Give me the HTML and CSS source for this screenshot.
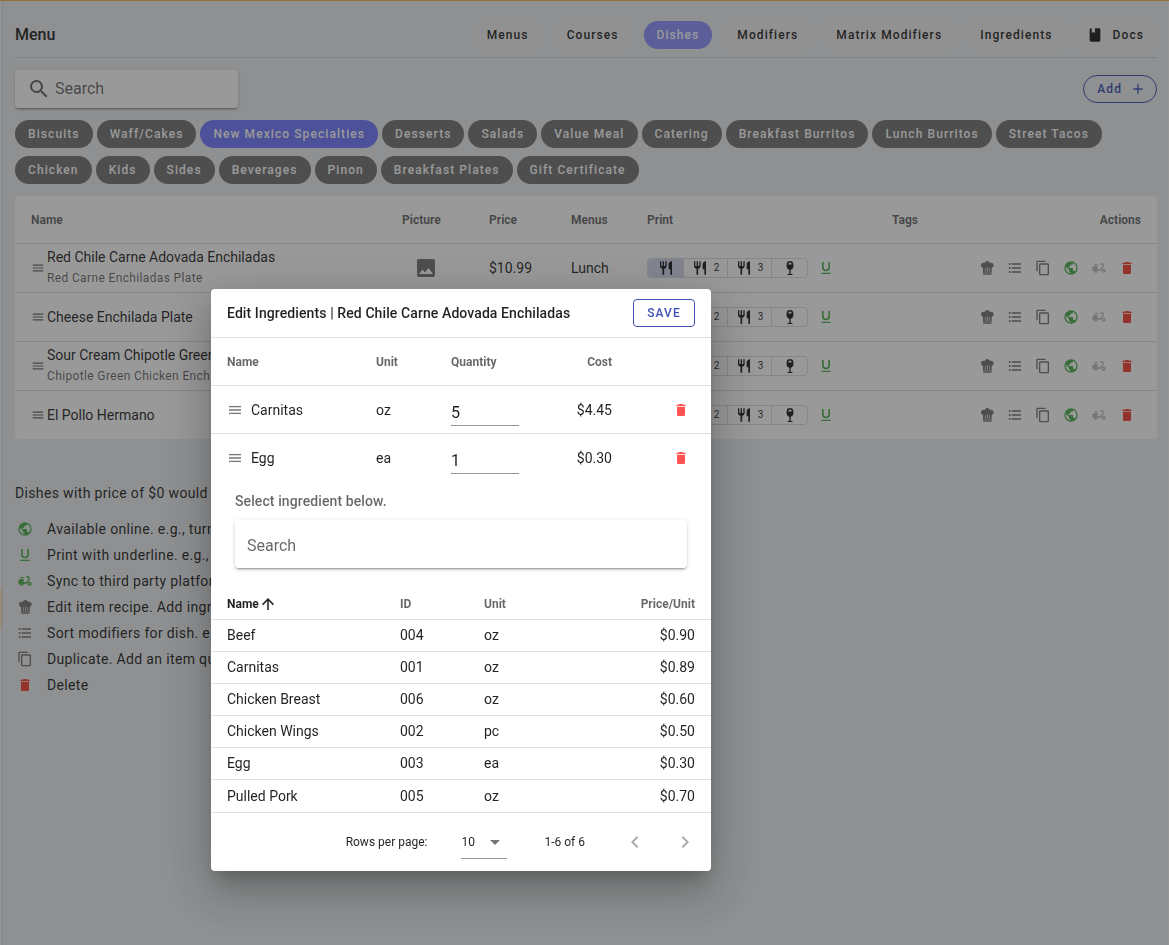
FILE: index.html
```html
<!DOCTYPE html>
<html lang="en">
<head>
<meta charset="utf-8">
<meta name="viewport" content="width=device-width, initial-scale=1">
<title>Menu</title>
<link rel="stylesheet" href="styles.css">
</head>
<body>
<svg class="sprite" aria-hidden="true">
  <symbol id="magnify" viewBox="0 0 24 24"><path d="M9.5,3A6.5,6.5 0 0,1 16,9.5C16,11.11 15.41,12.59 14.44,13.73L14.71,14H15.5L20.5,19L19,20.5L14,15.5V14.71L13.73,14.44C12.59,15.41 11.11,16 9.5,16A6.5,6.5 0 0,1 3,9.5A6.5,6.5 0 0,1 9.5,3M9.5,5C7,5 5,7 5,9.5C5,12 7,14 9.5,14C12,14 14,12 14,9.5C14,7 12,5 9.5,5Z"/></symbol>
  <symbol id="delete" viewBox="0 0 24 24"><path d="M19,4H15.5L14.5,3H9.5L8.5,4H5V6H19M6,19A2,2 0 0,0 8,21H16A2,2 0 0,0 18,19V7H6V19Z"/></symbol>
  <symbol id="earth" viewBox="0 0 24 24"><path d="M17.9,17.39C17.64,16.59 16.89,16 16,16H15V13A1,1 0 0,0 14,12H8V10H10A1,1 0 0,0 11,9V7H13A2,2 0 0,0 15,5V4.59C17.93,5.77 20,8.64 20,12C20,14.08 19.2,15.97 17.9,17.39M11,19.93C7.05,19.44 4,16.08 4,12C4,11.38 4.08,10.78 4.21,10.21L9,15V16A2,2 0 0,0 11,18M12,2A10,10 0 0,0 2,12A10,10 0 0,0 12,22A10,10 0 0,0 22,12A10,10 0 0,0 12,2Z"/></symbol>
  <symbol id="copy" viewBox="0 0 24 24"><path d="M19,21H8V7H19M19,5H8A2,2 0 0,0 6,7V21A2,2 0 0,0 8,23H19A2,2 0 0,0 21,21V7A2,2 0 0,0 19,5M16,1H4A2,2 0 0,0 2,3V17H4V3H16V1Z"/></symbol>
  <symbol id="list" viewBox="0 0 24 24"><path d="M7,5H21V7H7V5M7,13V11H21V13H7M7,19V17H21V19H7M4,4.5A1.5,1.5 0 0,1 4,7.5A1.5,1.5 0 0,1 4,4.5M4,10.5A1.5,1.5 0 0,1 4,13.5A1.5,1.5 0 0,1 4,10.5M4,16.5A1.5,1.5 0 0,1 4,19.5A1.5,1.5 0 0,1 4,16.5Z"/></symbol>
  <symbol id="underline" viewBox="0 0 24 24"><path d="M5,21H19V19H5V21M12,17A6,6 0 0,0 18,11V3H15.5V11A3.5,3.5 0 0,1 12,14.5A3.5,3.5 0 0,1 8.5,11V3H6V11A6,6 0 0,0 12,17Z"/></symbol>
  <symbol id="image" viewBox="0 0 24 24"><path d="M8.5,13.5L11,16.5L14.5,12L19,18H5M21,19V5C21,3.89 20.1,3 19,3H5A2,2 0 0,0 3,5V19A2,2 0 0,0 5,21H19A2,2 0 0,0 21,19Z"/></symbol>
  <symbol id="cutlery" viewBox="0 0 24 24"><path d="M11,9H9V2H7V9H5V2H3V9C3,11.12 4.66,12.84 6.75,12.97V22H9.25V12.97C11.34,12.84 13,11.12 13,9V2H11V9M16,6V14H18.5V22H21V2C18.24,2 16,4.24 16,6Z"/></symbol>
  <symbol id="wine" viewBox="0 0 24 24"><path fill-rule="evenodd" d="M9,2H15C16.5,3.5 17.2,5.5 17.2,8.5C17.2,11.8 15.6,14 13,14.6V20.5L15.8,21.3V22.5H8.2V21.3L11,20.5V14.6C8.4,14 6.8,11.8 6.8,8.5C6.8,5.5 7.5,3.500 9,2M10.2,4L9.6,6.8H14.4L13.8,4H10.2Z"/></symbol>
  <symbol id="chef" viewBox="0 0 24 24"><path d="M12.5,1.5C10.73,1.5 9.17,2.67 8.67,4.37C8.14,4.13 7.58,4 7,4A4,4 0 0,0 3,8C3,9.82 4.24,11.41 6,11.87V19H19V11.87C20.76,11.41 22,9.82 22,8A4,4 0 0,0 18,4C17.42,4 16.86,4.13 16.33,4.37C15.83,2.67 14.27,1.5 12.5,1.5M12,10.5H13V17.5H12V10.5M9,12.5H10V17.5H9V12.5M15,12.5H16V17.5H15V12.5M6,20V21A1,1 0 0,0 7,22H18A1,1 0 0,0 19,21V20H6Z"/></symbol>
  <symbol id="moped" viewBox="0 0 24 24"><path d="M19,7C19,5.9 18.1,5 17,5H14V7H17V9.65L13.5,14H10V9H6C3.79,9 2,10.79 2,13V16H4C4,17.66 5.34,19 7,19S10,17.66 10,16H14.5L19,10.35V7M7,17C6.45,17 6,16.55 6,16H8C8,16.55 7.55,17 7,17M5,6H10V8H5V6M19,13C17.34,13 16,14.34 16,16S17.34,19 19,19S22,17.66 22,16S20.66,13 19,13M19,17C18.45,17 18,16.55 18,16S18.45,15 19,15S20,15.45 20,16S19.55,17 19,17Z"/></symbol>
  <symbol id="book" viewBox="0 0 24 24"><path d="M18,22A2,2 0 0,0 20,20V4C20,2.89 19.1,2 18,2H12V9L9.5,7.5L7,9V2H6A2,2 0 0,0 4,4V20A2,2 0 0,0 6,22H18Z"/></symbol>
  <symbol id="plus" viewBox="0 0 24 24"><path d="M19,13H13V19H11V13H5V11H11V5H13V11H19V13Z"/></symbol>
  <symbol id="left" viewBox="0 0 24 24"><path d="M15.41,16.58L10.83,12L15.41,7.41L14,6L8,12L14,18L15.41,16.58Z"/></symbol>
  <symbol id="right" viewBox="0 0 24 24"><path d="M8.59,16.58L13.17,12L8.59,7.41L10,6L16,12L10,18L8.59,16.58Z"/></symbol>
  <symbol id="up" viewBox="0 0 24 24"><path d="M13,20H11V8L5.5,13.5L4.08,12.08L12,4.16L19.92,12.08L18.5,13.5L13,8V20Z"/></symbol>
  <symbol id="drag" viewBox="0 0 24 24"><path d="M3,6H21V8H3V6M3,11H21V13H3V11M3,16H21V18H3V16Z"/></symbol>
  <symbol id="down" viewBox="0 0 24 24"><path d="M7,10L12,15L17,10H7Z"/></symbol>
</svg>

<div class="page">
  <div class="rail"><span class="rail-mark"></span></div>
  <main class="content">
    <header class="topbar">
      <h1>Menu</h1>
      <nav class="tabs">
        <button class="pill tab">Menus</button>
        <button class="pill tab">Courses</button>
        <button class="pill tab active">Dishes</button>
        <button class="pill tab">Modifiers</button>
        <button class="pill tab">Matrix Modifiers</button>
        <button class="pill tab">Ingredients</button>
        <button class="pill tab docs"><svg class="i16"><use href="#book"/></svg>Docs</button>
      </nav>
    </header>

    <div class="toolbar">
      <label class="search"><svg class="i24"><use href="#magnify"/></svg><input type="text" placeholder="Search" aria-label="Search dishes"></label>
      <button class="pill add">Add<svg class="i16"><use href="#plus"/></svg></button>
    </div>

    <div class="chips">
      <button class="pill chip">Biscuits</button>
      <button class="pill chip">Waff/Cakes</button>
      <button class="pill chip selected">New Mexico Specialties</button>
      <button class="pill chip">Desserts</button>
      <button class="pill chip">Salads</button>
      <button class="pill chip">Value Meal</button>
      <button class="pill chip">Catering</button>
      <button class="pill chip">Breakfast Burritos</button>
      <button class="pill chip">Lunch Burritos</button>
      <button class="pill chip">Street Tacos</button>
      <button class="pill chip">Chicken</button>
      <button class="pill chip">Kids</button>
      <button class="pill chip">Sides</button>
      <button class="pill chip">Beverages</button>
      <button class="pill chip">Pinon</button>
      <button class="pill chip">Breakfast Plates</button>
      <button class="pill chip">Gift Certificate</button>
    </div>

    <table class="dishes">
      <colgroup><col class="d-name"><col class="d-pic"><col class="d-price"><col class="d-menus"><col class="d-print"><col class="d-tags"><col></colgroup>
      <thead><tr><th>Name</th><th>Picture</th><th>Price</th><th>Menus</th><th>Print</th><th>Tags</th><th class="end">Actions</th></tr></thead>
      <tbody>
        <tr>
          <td><div class="dish"><svg class="i14"><use href="#drag"/></svg><div><div>Red Chile Carne Adovada Enchiladas</div><small>Red Carne Enchiladas Plate</small></div></div></td>
          <td class="pic"><svg class="i24"><use href="#image"/></svg></td><td>$10.99</td><td>Lunch</td>
          <td><div class="print"><div class="group"><button class="on" aria-label="Printer 1"><svg class="i16"><use href="#cutlery"/></svg></button><button><svg class="i16"><use href="#cutlery"/></svg>2</button><button><svg class="i16"><use href="#cutlery"/></svg>3</button><button aria-label="Bar"><svg class="i16"><use href="#wine"/></svg></button></div><button class="icon green" aria-label="Underline"><svg class="i16"><use href="#underline"/></svg></button></div></td>
          <td></td>
          <td><div class="actions"><button class="icon" aria-label="Recipe"><svg class="i16"><use href="#chef"/></svg></button><button class="icon" aria-label="Sort modifiers"><svg class="i16"><use href="#list"/></svg></button><button class="icon" aria-label="Duplicate"><svg class="i16"><use href="#copy"/></svg></button><button class="icon green" aria-label="Online"><svg class="i16"><use href="#earth"/></svg></button><button class="icon faint" aria-label="Sync"><svg class="i16"><use href="#moped"/></svg></button><button class="icon red" aria-label="Delete"><svg class="i16"><use href="#delete"/></svg></button></div></td>
        </tr>
        <tr>
          <td><div class="dish"><svg class="i14"><use href="#drag"/></svg><div>Cheese Enchilada Plate</div></div></td>
          <td></td><td></td><td></td>
          <td><div class="print"><div class="group"><button class="on" aria-label="Printer 1"><svg class="i16"><use href="#cutlery"/></svg></button><button><svg class="i16"><use href="#cutlery"/></svg>2</button><button><svg class="i16"><use href="#cutlery"/></svg>3</button><button aria-label="Bar"><svg class="i16"><use href="#wine"/></svg></button></div><button class="icon green" aria-label="Underline"><svg class="i16"><use href="#underline"/></svg></button></div></td>
          <td></td>
          <td><div class="actions"><button class="icon" aria-label="Recipe"><svg class="i16"><use href="#chef"/></svg></button><button class="icon" aria-label="Sort modifiers"><svg class="i16"><use href="#list"/></svg></button><button class="icon" aria-label="Duplicate"><svg class="i16"><use href="#copy"/></svg></button><button class="icon green" aria-label="Online"><svg class="i16"><use href="#earth"/></svg></button><button class="icon faint" aria-label="Sync"><svg class="i16"><use href="#moped"/></svg></button><button class="icon red" aria-label="Delete"><svg class="i16"><use href="#delete"/></svg></button></div></td>
        </tr>
        <tr>
          <td><div class="dish"><svg class="i14"><use href="#drag"/></svg><div><div>Sour Cream Chipotle Green</div><small>Chipotle Green Chicken Ench</small></div></div></td>
          <td></td><td></td><td></td>
          <td><div class="print"><div class="group"><button class="on" aria-label="Printer 1"><svg class="i16"><use href="#cutlery"/></svg></button><button><svg class="i16"><use href="#cutlery"/></svg>2</button><button><svg class="i16"><use href="#cutlery"/></svg>3</button><button aria-label="Bar"><svg class="i16"><use href="#wine"/></svg></button></div><button class="icon green" aria-label="Underline"><svg class="i16"><use href="#underline"/></svg></button></div></td>
          <td></td>
          <td><div class="actions"><button class="icon" aria-label="Recipe"><svg class="i16"><use href="#chef"/></svg></button><button class="icon" aria-label="Sort modifiers"><svg class="i16"><use href="#list"/></svg></button><button class="icon" aria-label="Duplicate"><svg class="i16"><use href="#copy"/></svg></button><button class="icon green" aria-label="Online"><svg class="i16"><use href="#earth"/></svg></button><button class="icon faint" aria-label="Sync"><svg class="i16"><use href="#moped"/></svg></button><button class="icon red" aria-label="Delete"><svg class="i16"><use href="#delete"/></svg></button></div></td>
        </tr>
        <tr>
          <td><div class="dish"><svg class="i14"><use href="#drag"/></svg><div>El Pollo Hermano</div></div></td>
          <td></td><td></td><td></td>
          <td><div class="print"><div class="group"><button class="on" aria-label="Printer 1"><svg class="i16"><use href="#cutlery"/></svg></button><button><svg class="i16"><use href="#cutlery"/></svg>2</button><button><svg class="i16"><use href="#cutlery"/></svg>3</button><button aria-label="Bar"><svg class="i16"><use href="#wine"/></svg></button></div><button class="icon green" aria-label="Underline"><svg class="i16"><use href="#underline"/></svg></button></div></td>
          <td></td>
          <td><div class="actions"><button class="icon" aria-label="Recipe"><svg class="i16"><use href="#chef"/></svg></button><button class="icon" aria-label="Sort modifiers"><svg class="i16"><use href="#list"/></svg></button><button class="icon" aria-label="Duplicate"><svg class="i16"><use href="#copy"/></svg></button><button class="icon green" aria-label="Online"><svg class="i16"><use href="#earth"/></svg></button><button class="icon faint" aria-label="Sync"><svg class="i16"><use href="#moped"/></svg></button><button class="icon red" aria-label="Delete"><svg class="i16"><use href="#delete"/></svg></button></div></td>
        </tr>
      </tbody>
    </table>

    <section class="help">
      <p>Dishes with price of $0 would open</p>
      <ul>
        <li><svg class="i16 green"><use href="#earth"/></svg>Available online. e.g., turn off</li>
        <li><svg class="i16 green"><use href="#underline"/></svg>Print with underline. e.g., to</li>
        <li><svg class="i16 green"><use href="#moped"/></svg>Sync to third party platform</li>
        <li><svg class="i16"><use href="#chef"/></svg>Edit item recipe. Add ingred</li>
        <li><svg class="i16"><use href="#list"/></svg>Sort modifiers for dish. e.g.</li>
        <li><svg class="i16"><use href="#copy"/></svg>Duplicate. Add an item quick</li>
        <li><svg class="i16 red"><use href="#delete"/></svg>Delete</li>
      </ul>
    </section>
  </main>
</div>

<div class="overlay">
  <section class="dialog" role="dialog" aria-labelledby="dialog-title">
    <header class="dialog-head">
      <h2 id="dialog-title">Edit Ingredients | Red Chile Carne Adovada Enchiladas</h2>
      <button class="save">SAVE</button>
    </header>
    <table class="recipe">
      <colgroup><col class="r-name"><col class="r-unit"><col class="r-qty"><col class="r-cost"><col></colgroup>
      <thead><tr><th>Name</th><th>Unit</th><th>Quantity</th><th class="end">Cost</th><th></th></tr></thead>
      <tbody>
        <tr><td><div class="item"><svg class="i16"><use href="#drag"/></svg>Carnitas</div></td><td>oz</td><td><input class="qty" type="text" value="5" aria-label="Carnitas quantity"></td><td class="end">$4.45</td><td><button class="icon red trash" aria-label="Delete Carnitas"><svg class="i16"><use href="#delete"/></svg></button></td></tr>
        <tr><td><div class="item"><svg class="i16"><use href="#drag"/></svg>Egg</div></td><td>ea</td><td><input class="qty" type="text" value="1" aria-label="Egg quantity"></td><td class="end">$0.30</td><td><button class="icon red trash" aria-label="Delete Egg"><svg class="i16"><use href="#delete"/></svg></button></td></tr>
      </tbody>
    </table>
    <div class="picker">
      <label for="find">Select ingredient below.</label>
      <input id="find" type="text" placeholder="Search">
    </div>
    <table class="stock">
      <colgroup><col class="s-name"><col class="s-id"><col class="s-unit"><col></colgroup>
      <thead><tr><th class="sorted"><span>Name<svg class="i18"><use href="#up"/></svg></span></th><th>ID</th><th>Unit</th><th class="end">Price/Unit</th></tr></thead>
      <tbody>
        <tr><td>Beef</td><td>004</td><td>oz</td><td class="end">$0.90</td></tr>
        <tr><td>Carnitas</td><td>001</td><td>oz</td><td class="end">$0.89</td></tr>
        <tr><td>Chicken Breast</td><td>006</td><td>oz</td><td class="end">$0.60</td></tr>
        <tr><td>Chicken Wings</td><td>002</td><td>pc</td><td class="end">$0.50</td></tr>
        <tr><td>Egg</td><td>003</td><td>ea</td><td class="end">$0.30</td></tr>
        <tr><td>Pulled Pork</td><td>005</td><td>oz</td><td class="end">$0.70</td></tr>
      </tbody>
    </table>
    <footer class="pager">
      <label for="rows">Rows per page:</label>
      <span class="select"><select id="rows"><option>10</option></select><svg class="i24"><use href="#down"/></svg></span>
      <span class="range">1-6 of 6</span>
      <button class="step" aria-label="Previous page" disabled><svg class="i24"><use href="#left"/></svg></button>
      <button class="step" aria-label="Next page" disabled><svg class="i24"><use href="#right"/></svg></button>
    </footer>
  </section>
</div>
</body>
</html>
```
FILE: styles.css
```css
*, *::before, *::after { box-sizing: border-box; }

body {
  margin: 0;
  background: #eceff1;
  color: rgba(0, 0, 0, .87);
  font: 14px/20px Roboto, sans-serif;
}

button, input, select { font: inherit; color: inherit; }
button { padding: 0; border: 0; background: none; cursor: pointer; }
h1, h2, p, ul { margin: 0; padding: 0; }

svg { flex: none; fill: currentColor; }
.sprite { position: absolute; width: 0; height: 0; }
.i14 { width: 14px; height: 14px; }
.i16 { width: 16px; height: 16px; }
.i18 { width: 18px; height: 18px; }
.i24 { width: 24px; height: 24px; }

/* Page shell */
.page {
  display: flex;
  min-height: 100vh;
  border-top: 1px solid #ffb057;
}
.rail {
  width: 3px;
  border-right: 1px solid #d6d8da;
  padding-top: 588px;
  background: #f2f4f5;
}
.rail-mark { display: block; height: 40px; background: #fce3cb; }
.content {
  flex: 1;
  min-width: 0;
  padding: 8px 11px 0 12px;
  border-right: 1px solid #f7f8f9;
}

.topbar {
  display: flex;
  align-items: center;
  justify-content: space-between;
  height: 49px;
  padding-top: 4px;
  border-bottom: 1px solid #cfd2d4;
}
h1 { font-size: 16px; font-weight: 500; }
.tabs { display: flex; gap: 12px; }

.pill {
  height: 28px;
  padding: 0 13px;
  border-radius: 14px;
  font-size: 12px;
  font-weight: 500;
  letter-spacing: .09em;
  white-space: nowrap;
}
.tab { background: #f1f0f0; }
.tab.active { background: #8c92ff; color: #fff; }
.docs { display: flex; align-items: center; gap: 10px; padding-left: 9px; }

.toolbar {
  display: flex;
  align-items: center;
  justify-content: space-between;
  padding: 12px 0;
}
.search {
  display: flex;
  align-items: center;
  gap: 4px;
  width: 223px;
  height: 38px;
  padding: 0 12px;
  border-radius: 4px;
  background: #fff;
  color: rgba(0, 0, 0, .6);
  box-shadow: 0 3px 1px -2px rgba(0, 0, 0, .2), 0 2px 2px rgba(0, 0, 0, .14), 0 1px 5px rgba(0, 0, 0, .12);
}
.search input {
  flex: 1;
  min-width: 0;
  border: 0;
  padding: 0;
  background: none;
  font-size: 16px;
}
::placeholder { color: rgba(0, 0, 0, .6); opacity: 1; }
.add {
  display: flex;
  align-items: center;
  gap: 8px;
  padding-right: 10px;
  border: 1px solid #3f51b5;
  color: #3f51b5;
}

.chips { display: flex; flex-wrap: wrap; gap: 8px 4px; margin-bottom: 12px; }
.chip { background: #757575; color: #fff; }
.chip.selected { background: #727aff; }

/* Tables */
table { width: 100%; border-collapse: separate; border-spacing: 0; table-layout: fixed; }
th { font-size: 12px; font-weight: 700; color: rgba(0, 0, 0, .6); text-align: left; }
th, td { padding: 0 16px; border-bottom: 1px solid #e0e0e0; white-space: nowrap; }
.end { text-align: right; }

.dishes { border-radius: 4px; background: #fff; }
.dishes th { height: 48px; }
.dishes td { height: 49px; }
.dishes th, .dishes td { padding: 0 0 0 16px; border-color: #dcdcdc; }
.dishes th:last-child, .dishes td:last-child { padding-right: 16px; }
.dishes tr:last-child td { height: 48px; border-bottom: 0; }
.d-name { width: 371px; }
.d-pic { width: 87px; }
.d-price { width: 82px; }
.d-menus { width: 76px; }
.d-print { width: 245px; }
.d-tags { width: 80px; }
.dish { display: flex; align-items: center; gap: 2px; }
.dish svg { color: rgba(0, 0, 0, .6); }
.dish small {
  display: block;
  font-size: 12px;
  line-height: 22px;
  letter-spacing: .03em;
  color: rgba(0, 0, 0, .6);
}
.dishes .pic { padding-left: 28px; }
.pic svg { display: block; color: #757575; }

.print { display: flex; align-items: center; gap: 4px; }
.group {
  display: flex;
  border: 1px solid #dcdcdc;
  border-radius: 4px;
  overflow: hidden;
}
.group button {
  display: flex;
  align-items: center;
  justify-content: center;
  gap: 6px;
  width: 44px;
  height: 18px;
  font-size: 10px;
}
.group button + button { border-left: 1px solid #dcdcdc; }
.group button:last-child { width: 36px; }
.group .on { width: 35px; background: #d5d9ee; }

.icon {
  display: flex;
  align-items: center;
  justify-content: center;
  width: 28px;
  height: 28px;
  color: #757575;
}
.actions { display: flex; justify-content: flex-end; }
.green { color: #4caf50; }
.faint { color: #bdbdbd; }
.red { color: #ff5252; }
.dishes .red, .help .red { color: #f44336; }

.help { padding-top: 44px; letter-spacing: .025em; }
.help ul { list-style: none; padding-top: 13px; }
.help li { display: flex; align-items: center; gap: 14px; height: 26px; padding-left: 2px; }
.help svg { color: #757575; }
.help svg.green { color: #4caf50; }

/* Dialog */
.overlay {
  position: fixed;
  inset: 0;
  padding: 289px 0 0 211px;
  background: rgba(33, 33, 33, .46);
}
.dialog {
  width: 500px;
  border-radius: 4px;
  background: #fff;
  box-shadow: 0 11px 15px -7px rgba(0, 0, 0, .2), 0 24px 38px 3px rgba(0, 0, 0, .14), 0 9px 46px 8px rgba(0, 0, 0, .12);
}
.dialog-head {
  display: flex;
  align-items: center;
  justify-content: space-between;
  height: 49px;
  padding: 0 16px;
  border-bottom: 1px solid #e0e0e0;
}
h2 { font-size: 14px; font-weight: 500; letter-spacing: .007em; }
.save {
  width: 62px;
  height: 28px;
  border: 1px solid #3f51b5;
  border-radius: 4px;
  color: #3f51b5;
  font-size: 12px;
  font-weight: 500;
  letter-spacing: .09em;
}
.recipe th, .recipe td { height: 48px; padding: 0 0 0 16px; }
.recipe tbody tr:last-child td { border-bottom: 0; }
.r-name { width: 149px; }
.r-unit { width: 75px; }
.r-qty { width: 84px; }
.r-cost { width: 93px; }
.item { display: flex; align-items: center; gap: 8px; }
.item svg { color: #757575; }
.qty {
  display: block;
  width: 68px;
  height: 28px;
  margin-top: 4px;
  padding: 2px 0 0;
  border: 0;
  border-bottom: 1px solid #949494;
  background: none;
  font-size: 16px;
}
.trash { margin-left: 39px; }

.picker {
  display: flex;
  flex-direction: column;
  gap: 9px;
  padding: 9px 24px 20px;
}
.picker label { font-weight: 500; letter-spacing: .007em; color: rgba(0, 0, 0, .6); }
.picker input {
  width: 100%;
  height: 48px;
  padding: 2px 12px 0;
  border: 0;
  border-radius: 4px;
  font-size: 16px;
  box-shadow: 0 3px 1px -2px rgba(0, 0, 0, .2), 0 2px 2px rgba(0, 0, 0, .14), 0 1px 5px rgba(0, 0, 0, .12);
}

.stock th, .stock td { height: 32px; }
.stock td { padding-bottom: 1px; }
.stock tbody tr:last-child td { height: 33px; }
.stock .sorted { color: rgba(0, 0, 0, .87); }
.sorted span { display: flex; align-items: center; }
.s-name { width: 173px; }
.s-id { width: 84px; }
.s-unit { width: 100px; }

.pager {
  display: flex;
  align-items: center;
  justify-content: flex-end;
  height: 58px;
  padding-right: 14px;
  font-size: 12px;
}
.select {
  display: flex;
  align-items: center;
  width: 46px;
  height: 33px;
  margin: 0 37px 0 34px;
  border-bottom: 1px solid #949494;
}
.select select {
  appearance: none;
  width: 22px;
  padding: 0;
  border: 0;
  background: none;
}
.select svg, .step { color: rgba(0, 0, 0, .54); }
.range { margin-right: 38px; }
.step { width: 24px; height: 24px; opacity: .6; }
.step + .step { margin-left: 26px; }
```
